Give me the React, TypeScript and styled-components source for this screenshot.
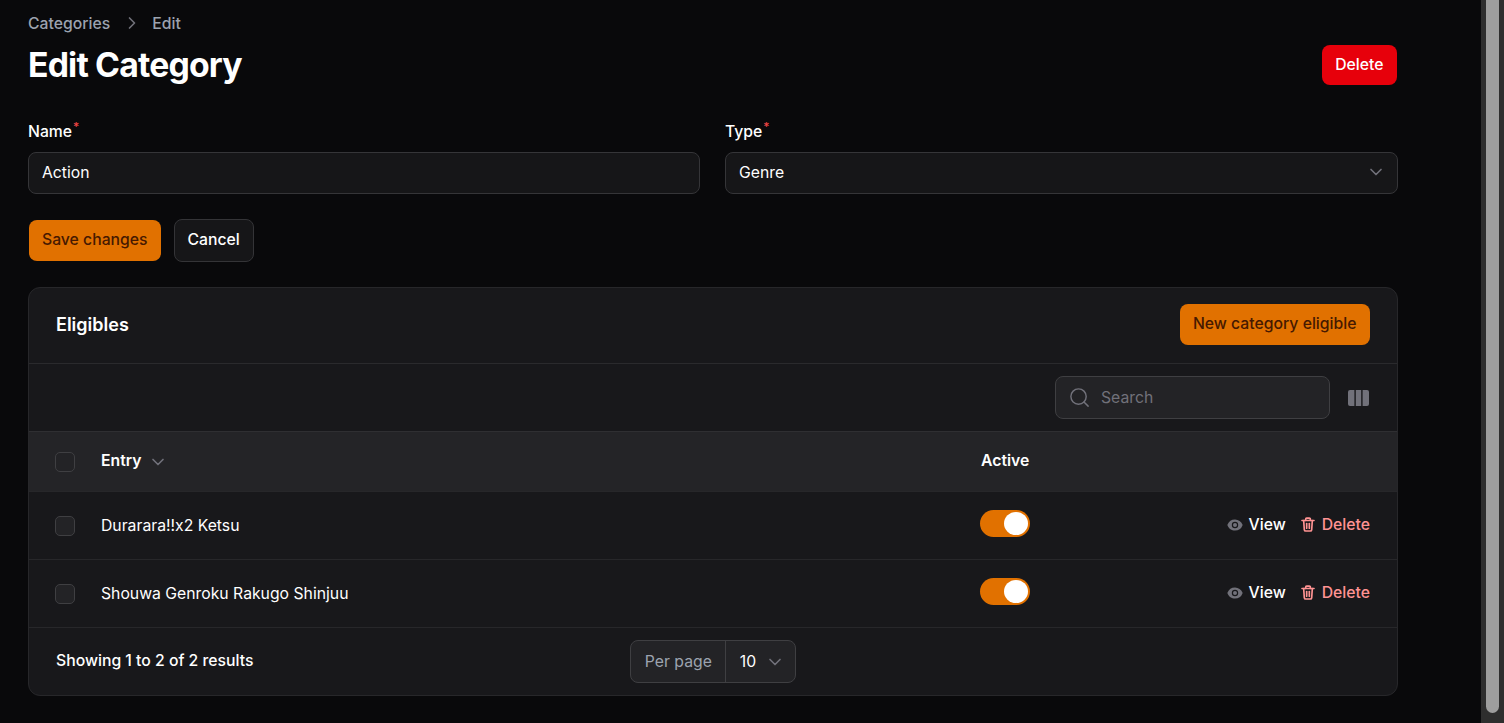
import { createGlobalStyle, styled } from "styled-components";
import { ChevronDown, ChevronRight, Search } from "lucide-react";

const GlobalStyle = createGlobalStyle`
  html, body {
    margin: 0;
    height: 100%;
    background: #09090b;
    overflow: hidden;
  }
  body {
    font-family: Inter, "Liberation Sans", sans-serif;
    font-size: 15.75px;
    color: #fff;
  }
  * { box-sizing: border-box; }
`;

const entries = ["Durarara!!x2 Ketsu", "Shouwa Genroku Rakugo Shinjuu"];

function EyeIcon() {
  return (
    <svg width="16" height="16" viewBox="0 0 20 20" fill="#71717a">
      <path d="M10 12.5a2.5 2.5 0 1 0 0-5 2.5 2.5 0 0 0 0 5Z" />
      <path
        fillRule="evenodd"
        clipRule="evenodd"
        d="M.664 10.59a1.651 1.651 0 0 1 0-1.186A10.004 10.004 0 0 1 10 3c4.257 0 7.893 2.66 9.336 6.41.147.381.146.804 0 1.186A10.004 10.004 0 0 1 10 17c-4.257 0-7.893-2.66-9.336-6.41ZM14 10a4 4 0 1 1-8 0 4 4 0 0 1 8 0Z"
      />
    </svg>
  );
}

function TrashIcon() {
  return (
    <svg width="16" height="17" viewBox="0 0 24 24" fill="none" stroke="#ff9393" strokeWidth="2.5" strokeLinecap="round" strokeLinejoin="round">
      <path d="M3 6h18" />
      <path d="M8.5 6V4a1.5 1.5 0 0 1 1.5-1.5h4A1.5 1.5 0 0 1 15.5 4v2" />
      <path d="M5.5 6l1 14a2 2 0 0 0 2 1.8h7a2 2 0 0 0 2-1.8l1-14" />
      <path d="M10 10.5v7" />
      <path d="M14 10.5v7" />
    </svg>
  );
}

function ColumnsIcon() {
  return (
    <svg width="21" height="16" viewBox="0 0 21 16" fill="#71717a">
      <path d="M2 0h4.4v16H2a2 2 0 0 1-2-2V2a2 2 0 0 1 2-2Z" />
      <rect x="7.8" width="5.4" height="16" />
      <path d="M14.6 0H19a2 2 0 0 1 2 2v12a2 2 0 0 1-2 2h-4.4V0Z" />
    </svg>
  );
}

export default function App() {
  return (
    <>
      <GlobalStyle />
      <Shell>
        <Main>
          <Breadcrumbs>
            <span>Categories</span>
            <CrumbChevron size={20} color="#71717a" />
            <span>Edit</span>
          </Breadcrumbs>
          <PageHeader>
            <Title>Edit Category</Title>
            <DangerButton>Delete</DangerButton>
          </PageHeader>

          <FormGrid>
            <Field>
              <FieldLabel>
                Name<Required>*</Required>
              </FieldLabel>
              <InputBox>Action</InputBox>
            </Field>
            <Field>
              <FieldLabel>
                Type<Required>*</Required>
              </FieldLabel>
              <InputBox>
                Genre
                <ChevronDown size={20} color="#71717a" />
              </InputBox>
            </Field>
          </FormGrid>

          <FormActions>
            <PrimaryButton>Save changes</PrimaryButton>
            <GhostButton>Cancel</GhostButton>
          </FormActions>

          <Card>
            <CardHeader>
              <CardTitle>Eligibles</CardTitle>
              <PrimaryButton>New category eligible</PrimaryButton>
            </CardHeader>
            <Toolbar>
              <SearchBox>
                <Search size={23} color="#71717a" strokeWidth={1.5} />
                <span>Search</span>
              </SearchBox>
              <ColumnsIcon />
            </Toolbar>
            <HeadRow>
              <CheckBox />
              <EntryCell>
                <strong>Entry</strong>
                <ChevronDown size={20} color="#71717a" />
              </EntryCell>
              <ActiveHeading>Active</ActiveHeading>
            </HeadRow>
            {entries.map((entry) => (
              <BodyRow key={entry}>
                <CheckBox />
                <EntryCell>{entry}</EntryCell>
                <Toggle>
                  <Knob />
                </Toggle>
                <RowActions>
                  <RowAction>
                    <EyeIcon />
                    View
                  </RowAction>
                  <RowAction $danger>
                    <TrashIcon />
                    Delete
                  </RowAction>
                </RowActions>
              </BodyRow>
            ))}
            <CardFooter>
              <FooterText>Showing 1 to 2 of 2 results</FooterText>
              <PerPage>
                <PerPageLabel>Per page</PerPageLabel>
                <PerPageValue>
                  10
                  <ChevronDown size={20} color="#71717a" />
                </PerPageValue>
              </PerPage>
              <span />
            </CardFooter>
          </Card>
        </Main>
        <ScrollTrack>
          <ScrollThumb />
        </ScrollTrack>
      </Shell>
    </>
  );
}

const Shell = styled.div`
  display: flex;
  height: 100vh;
  overflow: hidden;
`;

const Main = styled.main`
  flex: 1;
  min-width: 0;
  padding: 13px 83px 0 28px;
`;

const ScrollTrack = styled.div`
  flex: none;
  width: 23px;
  padding: 0 5px 10px;
  background: #2e2e2e;
`;

const ScrollThumb = styled.div`
  height: 100%;
  background: #9e9e9e;
  border-radius: 0 0 7px 7px;
`;

const Breadcrumbs = styled.nav`
  display: flex;
  align-items: center;
  gap: 11px;
  height: 20px;
  color: #9ca3af;
  font-weight: 500;
`;

const CrumbChevron = styled(ChevronRight)`
  margin: 0 -1px 0 1px;
`;

const PageHeader = styled.header`
  display: flex;
  align-items: center;
  justify-content: space-between;
  margin-top: 7px;
  height: 50px;
`;

const Title = styled.h1`
  margin: 0;
  font-size: 33.75px;
  font-weight: 700;
  line-height: 36px;
  letter-spacing: -0.84px;
`;

const Button = styled.button`
  height: 41px;
  padding: 0 13.5px 2px 13px;
  border: 0;
  border-radius: 8px;
  font-family: inherit;
  font-size: 15.75px;
  font-weight: 500;
`;

const DangerButton = styled(Button)`
  height: 40px;
  margin-right: 1px;
  background: #e7000b;
  color: #fff;
`;

const PrimaryButton = styled(Button)`
  background: #e17100;
  color: #461901;
`;

const GhostButton = styled(Button)`
  height: 43px;
  padding: 0 13px 2px;
  background: #161618;
  border: 1px solid #343437;
  color: #fff;
`;

const FormGrid = styled.section`
  display: grid;
  grid-template-columns: 672px 1fr;
  gap: 25px;
  margin-top: 32px;
`;

const Field = styled.div`
  display: flex;
  flex-direction: column;
  gap: 10px;
`;

const FieldLabel = styled.label`
  font-weight: 500;
  line-height: 20px;
  height: 20px;
`;

const Required = styled.sup`
  color: #ef4444;
  font-size: 12px;
  line-height: 0;
  margin-left: 1px;
`;

const InputBox = styled.div`
  display: flex;
  align-items: center;
  justify-content: space-between;
  height: 42px;
  padding: 0 11px 2px 13px;
  background: #161618;
  border: 1px solid #353538;
  border-radius: 8px;
`;

const FormActions = styled.div`
  display: flex;
  align-items: center;
  gap: 12.5px;
  margin-top: 25px;
  padding-left: 1px;
`;

const Card = styled.section`
  margin-top: 25px;
  background: #18181b;
  border: 1px solid #27272a;
  border-radius: 12px;
  overflow: hidden;
`;

const CardHeader = styled.div`
  display: flex;
  align-items: center;
  justify-content: space-between;
  height: 75px;
  padding: 0 27px 2px;
`;

const CardTitle = styled.h2`
  margin: 0;
  font-size: 18px;
  font-weight: 600;
`;

const Toolbar = styled.div`
  display: flex;
  align-items: center;
  justify-content: flex-end;
  gap: 18px;
  height: 68px;
  padding: 0 28px;
  border-top: 1px solid #2a2a2d;
`;

const SearchBox = styled.div`
  display: flex;
  align-items: center;
  gap: 10px;
  width: 275px;
  height: 43px;
  padding: 0 12px;
  background: #232326;
  border: 1px solid #3f3f42;
  border-radius: 8px;
  color: #71717a;
`;

const HeadRow = styled.div`
  display: grid;
  grid-template-columns: 45px 880px 1fr;
  align-items: center;
  height: 60px;
  padding-left: 26px;
  background: #242427;
  border-top: 1px solid #2f2f32;
  strong {
    font-weight: 600;
    margin-bottom: 2px;
  }
`;

const ActiveHeading = styled.strong`
  margin-left: 1px;
`;

const BodyRow = styled.div`
  display: grid;
  grid-template-columns: 45px 880px 50px 1fr;
  align-items: center;
  height: 68px;
  padding: 0 27px 0 26px;
  border-top: 1px solid #27272a;
`;

const CheckBox = styled.span`
  display: block;
  width: 20px;
  height: 20px;
  background: #232326;
  border: 1px solid #3f3f42;
  border-radius: 5px;
`;

const EntryCell = styled.div`
  display: flex;
  align-items: center;
  gap: 6px;
  padding-left: 1px;
`;

const Toggle = styled.span`
  display: flex;
  justify-content: flex-end;
  width: 50px;
  height: 27px;
  margin-bottom: 5px;
  padding: 2px 2px 0;
  background: #e17100;
  border-radius: 14px;
`;

const Knob = styled.span`
  width: 24px;
  height: 23px;
  border-radius: 50%;
  background: #fff;
`;

const RowActions = styled.div`
  display: flex;
  justify-content: flex-end;
  gap: 14px;
`;

const RowAction = styled.span<{ $danger?: boolean }>`
  display: inline-flex;
  align-items: center;
  gap: 6px;
  padding-bottom: 2px;
  font-weight: 500;
  color: ${({ $danger }) => ($danger ? "#ff9393" : "#fff")};
`;

const CardFooter = styled.div`
  display: grid;
  grid-template-columns: 1fr auto 1fr;
  align-items: center;
  height: 68px;
  padding: 0 27px;
  border-top: 1px solid #27272a;
  font-weight: 500;
`;

const FooterText = styled.span`
  margin-bottom: 2px;
`;

const PerPage = styled.div`
  display: flex;
  align-items: center;
  height: 43px;
  background: #232326;
  border: 1px solid #3f3f42;
  border-radius: 8px;
`;

const PerPageLabel = styled.span`
  display: flex;
  align-items: center;
  height: 100%;
  padding: 0 13px 0 14px;
  color: #9ca3af;
  font-weight: 400;
  border-right: 1px solid #3f3f42;
`;

const PerPageValue = styled.span`
  display: flex;
  align-items: center;
  gap: 9px;
  padding: 0 10px 0 14px;
  font-weight: 400;
`;
